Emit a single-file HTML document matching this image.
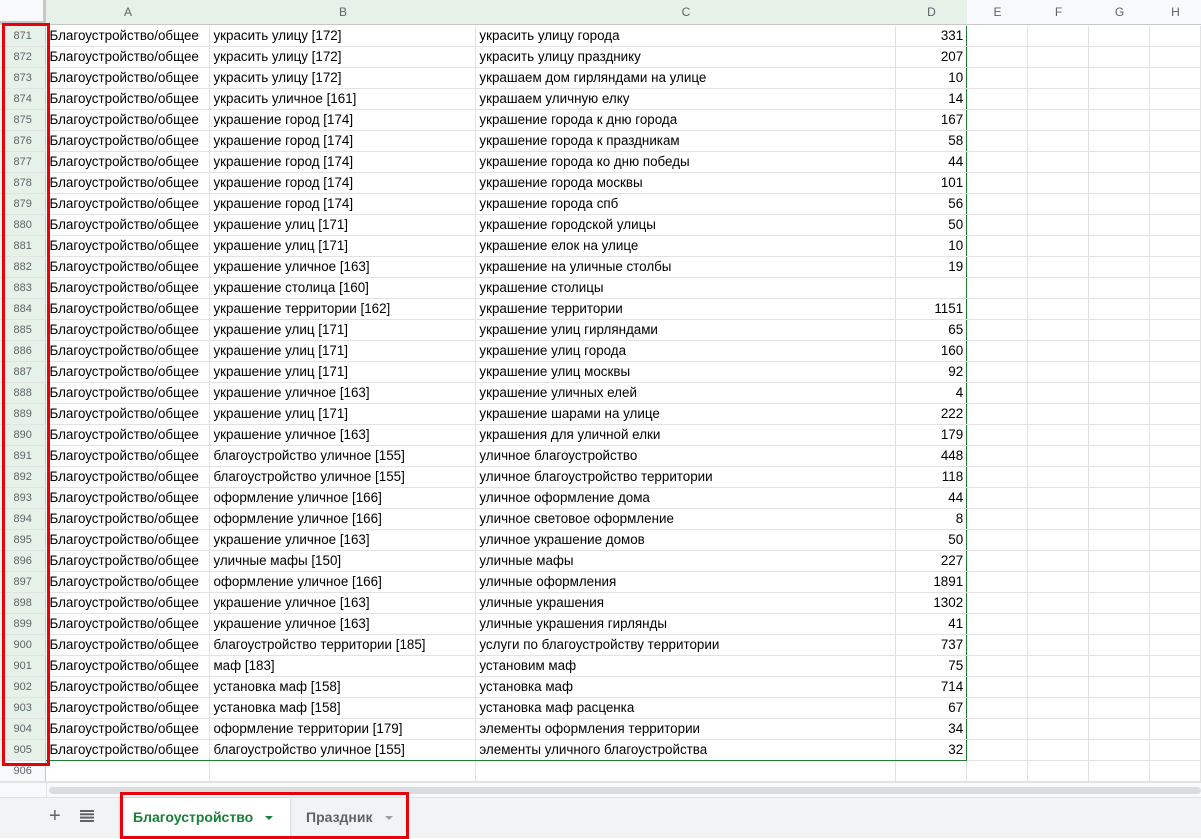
<!DOCTYPE html>
<html><head><meta charset="utf-8"><style>
body{margin:0;width:1201px;height:837px;overflow:hidden;background:#fff;font-family:"Liberation Sans",Arial,sans-serif;position:relative}
.hd{position:absolute;top:0;height:25px;border-right:1px solid #c7c7c7;border-bottom:1px solid #c7c7c7;box-sizing:border-box;font-size:12px;color:#5f6368;text-align:center;line-height:24px}
.g{background:#e6f2e8}.n{background:#f8f9fa}
table{position:absolute;left:0;top:26px;border-collapse:collapse;table-layout:fixed}
td{height:20px;padding:0 3px;border-right:1px solid #e2e2e2;border-bottom:1px solid #e2e2e2;font-size:13.4px;color:#000;white-space:nowrap;overflow:hidden;line-height:20px}
td.r{background:#e6f2e8;color:#5f6368;font-size:11px;text-align:center;border-right:1px solid #c7c7c7;padding:0}
td.d{text-align:right;border-right:1px solid #1e7e34}
tr.last td.a,tr.last td.b,tr.last td.c,tr.last td.d{border-bottom:1px solid #1e7e34}
tr.e td.r{background:#f8f9fa}
</style></head><body>
<div class="hd n" style="left:0;width:47px;border-right:4px solid #c7c7c7;border-bottom:4px solid #c7c7c7"></div>
<div class="hd g" style="left:46px;width:165px">A</div>
<div class="hd g" style="left:210px;width:267px">B</div>
<div class="hd g" style="left:476px;width:421px">C</div>
<div class="hd g" style="left:896px;width:72px">D</div>
<div class="hd n" style="left:967px;width:62px">E</div>
<div class="hd n" style="left:1028px;width:62px">F</div>
<div class="hd n" style="left:1089px;width:62px">G</div>
<div class="hd n" style="left:1150px;width:52px">H</div>
<table>
<colgroup><col style="width:46px"><col style="width:164px"><col style="width:266px"><col style="width:420px"><col style="width:71px"><col style="width:61px"><col style="width:61px"><col style="width:61px"><col style="width:51px"></colgroup>
<tr><td class="r">871</td><td class="a">Благоустройство/общее</td><td class="b">украсить улицу [172]</td><td class="c">украсить улицу города</td><td class="d">331</td><td></td><td></td><td></td><td></td></tr>
<tr><td class="r">872</td><td class="a">Благоустройство/общее</td><td class="b">украсить улицу [172]</td><td class="c">украсить улицу празднику</td><td class="d">207</td><td></td><td></td><td></td><td></td></tr>
<tr><td class="r">873</td><td class="a">Благоустройство/общее</td><td class="b">украсить улицу [172]</td><td class="c">украшаем дом гирляндами на улице</td><td class="d">10</td><td></td><td></td><td></td><td></td></tr>
<tr><td class="r">874</td><td class="a">Благоустройство/общее</td><td class="b">украсить уличное [161]</td><td class="c">украшаем уличную елку</td><td class="d">14</td><td></td><td></td><td></td><td></td></tr>
<tr><td class="r">875</td><td class="a">Благоустройство/общее</td><td class="b">украшение город [174]</td><td class="c">украшение города к дню города</td><td class="d">167</td><td></td><td></td><td></td><td></td></tr>
<tr><td class="r">876</td><td class="a">Благоустройство/общее</td><td class="b">украшение город [174]</td><td class="c">украшение города к праздникам</td><td class="d">58</td><td></td><td></td><td></td><td></td></tr>
<tr><td class="r">877</td><td class="a">Благоустройство/общее</td><td class="b">украшение город [174]</td><td class="c">украшение города ко дню победы</td><td class="d">44</td><td></td><td></td><td></td><td></td></tr>
<tr><td class="r">878</td><td class="a">Благоустройство/общее</td><td class="b">украшение город [174]</td><td class="c">украшение города москвы</td><td class="d">101</td><td></td><td></td><td></td><td></td></tr>
<tr><td class="r">879</td><td class="a">Благоустройство/общее</td><td class="b">украшение город [174]</td><td class="c">украшение города спб</td><td class="d">56</td><td></td><td></td><td></td><td></td></tr>
<tr><td class="r">880</td><td class="a">Благоустройство/общее</td><td class="b">украшение улиц [171]</td><td class="c">украшение городской улицы</td><td class="d">50</td><td></td><td></td><td></td><td></td></tr>
<tr><td class="r">881</td><td class="a">Благоустройство/общее</td><td class="b">украшение улиц [171]</td><td class="c">украшение елок на улице</td><td class="d">10</td><td></td><td></td><td></td><td></td></tr>
<tr><td class="r">882</td><td class="a">Благоустройство/общее</td><td class="b">украшение уличное [163]</td><td class="c">украшение на уличные столбы</td><td class="d">19</td><td></td><td></td><td></td><td></td></tr>
<tr><td class="r">883</td><td class="a">Благоустройство/общее</td><td class="b">украшение столица [160]</td><td class="c">украшение столицы</td><td class="d"></td><td></td><td></td><td></td><td></td></tr>
<tr><td class="r">884</td><td class="a">Благоустройство/общее</td><td class="b">украшение территории [162]</td><td class="c">украшение территории</td><td class="d">1151</td><td></td><td></td><td></td><td></td></tr>
<tr><td class="r">885</td><td class="a">Благоустройство/общее</td><td class="b">украшение улиц [171]</td><td class="c">украшение улиц гирляндами</td><td class="d">65</td><td></td><td></td><td></td><td></td></tr>
<tr><td class="r">886</td><td class="a">Благоустройство/общее</td><td class="b">украшение улиц [171]</td><td class="c">украшение улиц города</td><td class="d">160</td><td></td><td></td><td></td><td></td></tr>
<tr><td class="r">887</td><td class="a">Благоустройство/общее</td><td class="b">украшение улиц [171]</td><td class="c">украшение улиц москвы</td><td class="d">92</td><td></td><td></td><td></td><td></td></tr>
<tr><td class="r">888</td><td class="a">Благоустройство/общее</td><td class="b">украшение уличное [163]</td><td class="c">украшение уличных елей</td><td class="d">4</td><td></td><td></td><td></td><td></td></tr>
<tr><td class="r">889</td><td class="a">Благоустройство/общее</td><td class="b">украшение улиц [171]</td><td class="c">украшение шарами на улице</td><td class="d">222</td><td></td><td></td><td></td><td></td></tr>
<tr><td class="r">890</td><td class="a">Благоустройство/общее</td><td class="b">украшение уличное [163]</td><td class="c">украшения для уличной елки</td><td class="d">179</td><td></td><td></td><td></td><td></td></tr>
<tr><td class="r">891</td><td class="a">Благоустройство/общее</td><td class="b">благоустройство уличное [155]</td><td class="c">уличное благоустройство</td><td class="d">448</td><td></td><td></td><td></td><td></td></tr>
<tr><td class="r">892</td><td class="a">Благоустройство/общее</td><td class="b">благоустройство уличное [155]</td><td class="c">уличное благоустройство территории</td><td class="d">118</td><td></td><td></td><td></td><td></td></tr>
<tr><td class="r">893</td><td class="a">Благоустройство/общее</td><td class="b">оформление уличное [166]</td><td class="c">уличное оформление дома</td><td class="d">44</td><td></td><td></td><td></td><td></td></tr>
<tr><td class="r">894</td><td class="a">Благоустройство/общее</td><td class="b">оформление уличное [166]</td><td class="c">уличное световое оформление</td><td class="d">8</td><td></td><td></td><td></td><td></td></tr>
<tr><td class="r">895</td><td class="a">Благоустройство/общее</td><td class="b">украшение уличное [163]</td><td class="c">уличное украшение домов</td><td class="d">50</td><td></td><td></td><td></td><td></td></tr>
<tr><td class="r">896</td><td class="a">Благоустройство/общее</td><td class="b">уличные мафы [150]</td><td class="c">уличные мафы</td><td class="d">227</td><td></td><td></td><td></td><td></td></tr>
<tr><td class="r">897</td><td class="a">Благоустройство/общее</td><td class="b">оформление уличное [166]</td><td class="c">уличные оформления</td><td class="d">1891</td><td></td><td></td><td></td><td></td></tr>
<tr><td class="r">898</td><td class="a">Благоустройство/общее</td><td class="b">украшение уличное [163]</td><td class="c">уличные украшения</td><td class="d">1302</td><td></td><td></td><td></td><td></td></tr>
<tr><td class="r">899</td><td class="a">Благоустройство/общее</td><td class="b">украшение уличное [163]</td><td class="c">уличные украшения гирлянды</td><td class="d">41</td><td></td><td></td><td></td><td></td></tr>
<tr><td class="r">900</td><td class="a">Благоустройство/общее</td><td class="b">благоустройство территории [185]</td><td class="c">услуги по благоустройству территории</td><td class="d">737</td><td></td><td></td><td></td><td></td></tr>
<tr><td class="r">901</td><td class="a">Благоустройство/общее</td><td class="b">маф [183]</td><td class="c">установим маф</td><td class="d">75</td><td></td><td></td><td></td><td></td></tr>
<tr><td class="r">902</td><td class="a">Благоустройство/общее</td><td class="b">установка маф [158]</td><td class="c">установка маф</td><td class="d">714</td><td></td><td></td><td></td><td></td></tr>
<tr><td class="r">903</td><td class="a">Благоустройство/общее</td><td class="b">установка маф [158]</td><td class="c">установка маф расценка</td><td class="d">67</td><td></td><td></td><td></td><td></td></tr>
<tr><td class="r">904</td><td class="a">Благоустройство/общее</td><td class="b">оформление территории [179]</td><td class="c">элементы оформления территории</td><td class="d">34</td><td></td><td></td><td></td><td></td></tr>
<tr class="last"><td class="r">905</td><td class="a">Благоустройство/общее</td><td class="b">благоустройство уличное [155]</td><td class="c">элементы уличного благоустройства</td><td class="d">32</td><td></td><td></td><td></td><td></td></tr>
<tr class="e"><td class="r">906</td><td></td><td></td><td></td><td style="border-right:1px solid #e2e2e2"></td><td></td><td></td><td></td><td></td></tr>
</table>
<div style="position:absolute;left:0;top:782px;width:1201px;height:15px;background:#f8f9fa;border-top:1px solid #e2e2e2"></div>
<div style="position:absolute;left:0;top:782px;width:46px;height:15px;border-right:1px solid #e2e2e2"></div>
<div style="position:absolute;left:49px;top:787px;width:1152px;height:7px;background:#dadce0;border-radius:4px"></div>
<div style="position:absolute;left:0;top:797px;width:1201px;height:40px;background:#f1f3f4;border-top:1px solid #e0e0e0"></div>
<div style="position:absolute;left:49px;top:805px;font-size:20px;color:#5f6368">+</div>
<svg style="position:absolute;left:80px;top:810px" width="14" height="12"><g fill="#5f6368"><rect y="0" width="14" height="2"/><rect y="3.3" width="14" height="2"/><rect y="6.6" width="14" height="2"/><rect y="10" width="14" height="2"/></g></svg>
<div style="position:absolute;left:120px;top:798px;width:170px;height:39px;background:#fff;box-shadow:0 1px 3px rgba(0,0,0,.2)"></div>
<div style="position:absolute;left:133px;top:809px;font-size:14px;font-weight:bold;color:#188038">Благоустройство</div>
<div style="position:absolute;left:265px;top:816px;border-left:4px solid transparent;border-right:4px solid transparent;border-top:4px solid #188038"></div>
<div style="position:absolute;left:306px;top:809px;font-size:14px;font-weight:bold;color:#5f6368">Праздник</div>
<div style="position:absolute;left:385px;top:816px;border-left:4px solid transparent;border-right:4px solid transparent;border-top:4px solid #9aa0a6"></div>
<div style="position:absolute;left:2px;top:23px;width:42px;height:737px;border:3px solid #e8000b"></div>
<div style="position:absolute;left:120px;top:792px;width:283px;height:41px;border:3px solid #e8000b"></div>
</body></html>
